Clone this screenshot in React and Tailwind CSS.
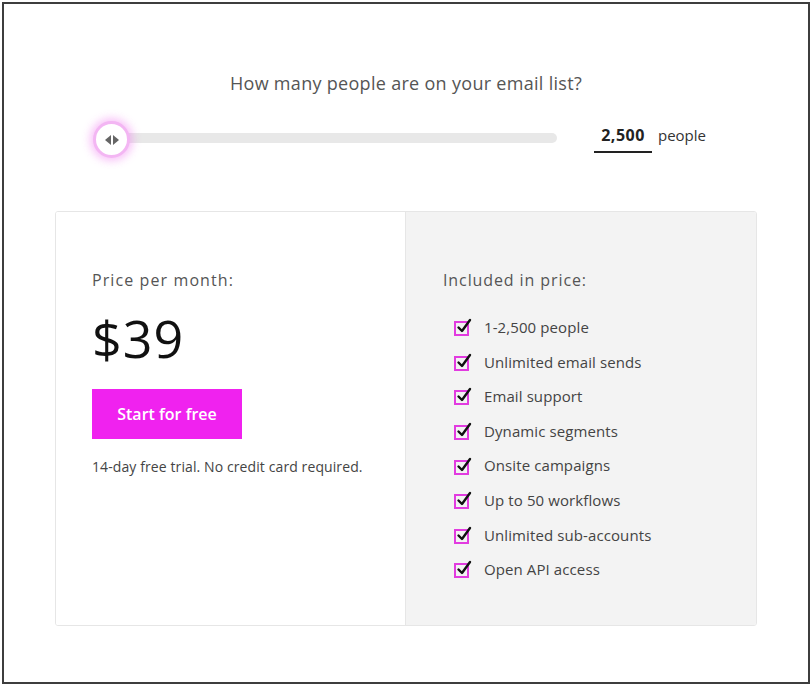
import React from 'react';

const features = [
  '1-2,500 people',
  'Unlimited email sends',
  'Email support',
  'Dynamic segments',
  'Onsite campaigns',
  'Up to 50 workflows',
  'Unlimited sub-accounts',
  'Open API access',
];

const CheckIcon = () => (
  <svg width="20" height="20" viewBox="0 0 20 20" className="shrink-0">
    <rect x="2" y="5" width="13" height="13" fill="none" stroke="#e23be0" strokeWidth="2" />
    <path d="M5.5 10.5 L9 14 L17 3" fill="none" stroke="#111" strokeWidth="2.4" strokeLinecap="round" strokeLinejoin="round" />
  </svg>
);

const App = () => {
  return (
    <div className="w-[810px] h-[684px] bg-white pt-[2px] pl-[2px]" style={{ fontFamily: '"Open Sans", Lato, sans-serif' }}>
      <div className="w-[808px] h-[682px] border-2 border-[#3d3d3d] flex flex-col items-center">
        <h1 className="mt-[66px] text-[18px] text-[#555] tracking-[0.3px]">How many people are on your email list?</h1>

        <div className="mt-[21px] w-full flex items-center pl-[89px]">
          <div className="relative w-[464px] h-[40px] flex items-center">
            <div className="ml-[19px] w-[445px] h-[10px] rounded-full bg-[#e8e8e8]" />
            <div className="absolute left-0 top-[3px] w-[37px] h-[37px] rounded-full bg-white border-[3px] border-[#f3b6f3] shadow-[0_0_9px_3px_rgba(240,120,240,0.45)] flex items-center justify-center gap-[2px]">
              <span className="w-0 h-0 border-y-[5px] border-y-transparent border-r-[6px] border-r-[#666]" />
              <span className="w-0 h-0 border-y-[5px] border-y-transparent border-l-[6px] border-l-[#666]" />
            </div>
          </div>
          <div className="ml-[37px] flex items-baseline">
            <span className="w-[58px] text-center text-[16px] font-bold text-[#222] tracking-[0.5px] border-b-2 border-[#222] pb-[4px]">2,500</span>
            <span className="ml-[6px] text-[15px] text-[#333]">people</span>
          </div>
        </div>

        <div className="mt-[53px] w-[702px] h-[415px] border border-[#e6e6e6] rounded-[3px] flex overflow-hidden">
          <div className="w-[350px] bg-white border-r border-[#e6e6e6] pl-[36px] pt-[56px]">
            <p className="text-[16px] text-[#555] tracking-[1.1px]">Price per month:</p>
            <p className="mt-[15px] text-[52px] leading-[62px] text-[#111] tracking-[1px]">$39</p>
            <button type="button" className="mt-[20px] w-[150px] h-[50px] bg-[#f022ef] text-white text-[16px] font-semibold">
              Start for free
            </button>
            <p className="mt-[17px] text-[14px] text-[#444] tracking-[0.1px]">14-day free trial. No credit card required.</p>
          </div>
          <div className="flex-1 bg-[#f3f3f3] pl-[37px] pt-[56px]">
            <p className="text-[16px] text-[#555] tracking-[0.9px]">Included in price:</p>
            <ul className="mt-[18px] pl-[10px]">
              {features.map(item => (
                <li key={item} className="h-[34.6px] flex items-center gap-[11px] text-[15px] text-[#444] tracking-[0.1px]">
                  <CheckIcon />
                  <span>{item}</span>
                </li>
              ))}
            </ul>
          </div>
        </div>
      </div>
    </div>
  );
};

export default App;
